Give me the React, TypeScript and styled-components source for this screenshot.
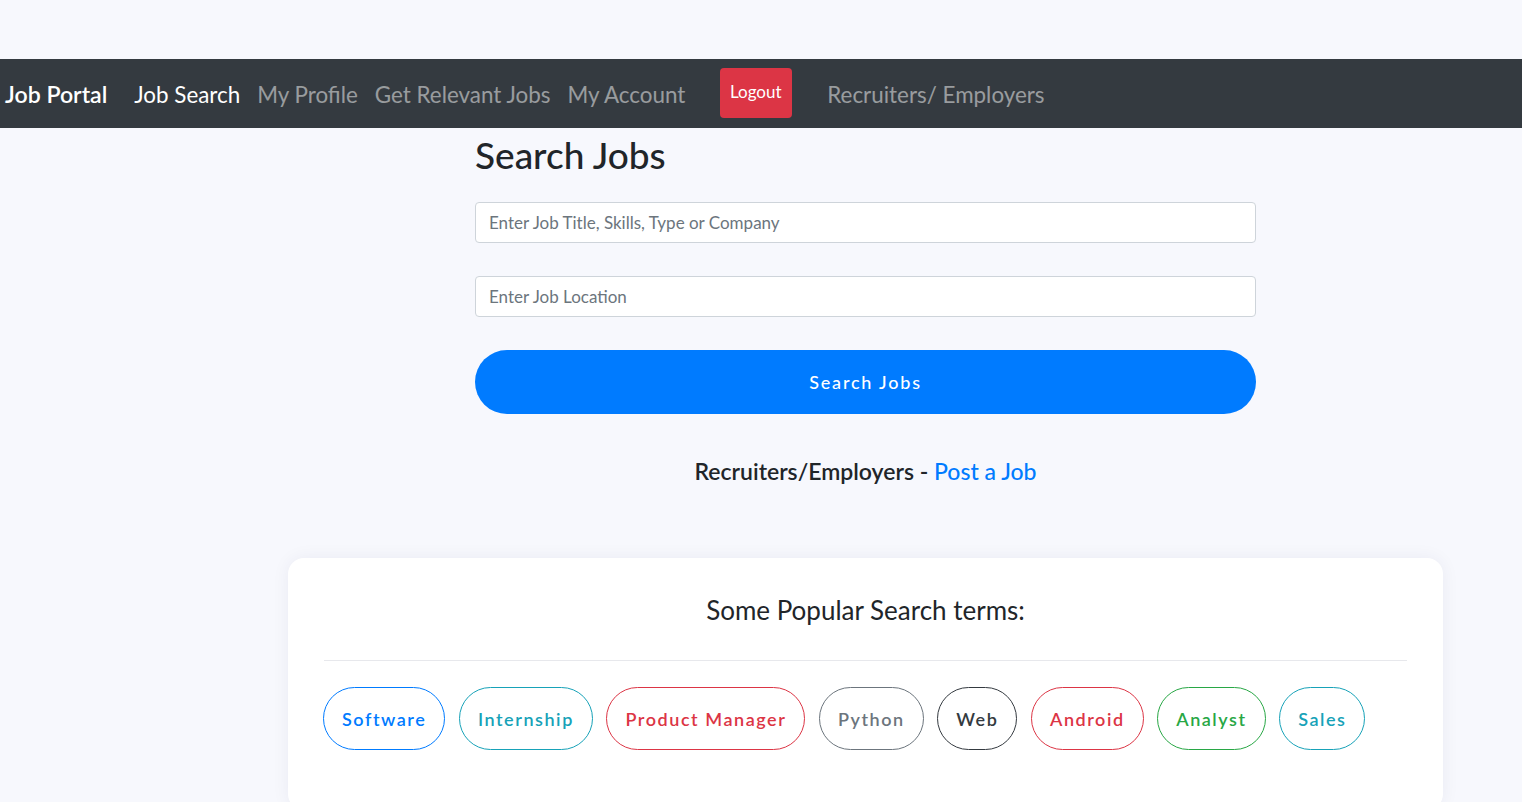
import React from 'react'
import styled, { createGlobalStyle } from 'styled-components'

const GlobalStyle = createGlobalStyle`
  html, body {
    margin: 0;
    padding: 0;
    background: #f7f8fd;
    font-family: Lato, "Open Sans", sans-serif;
    color: #212529;
    overflow: hidden;
  }
`

const Page = styled.div`
  padding-top: 59px;
  min-height: 802px;
  box-sizing: border-box;
`

const NavBar = styled.nav`
  height: 69px;
  background: #343a40;
  display: flex;
  align-items: center;
  padding: 1px 0 0 5px;
  box-sizing: border-box;
`

const Brand = styled.a`
  color: #fff;
  font-size: 23.1px;
  font-weight: 600;
  margin-right: 18.5px;
  text-decoration: none;
`

const NavLink = styled.a<{ $active?: boolean }>`
  color: ${({ $active }) => ($active ? '#fff' : 'rgba(255, 255, 255, 0.5)')};
  font-size: 22.4px;
  padding: 0 8.5px;
  text-decoration: none;
  white-space: nowrap;
`

const LogoutButton = styled.button`
  background: #dc3545;
  color: #fff;
  border: none;
  border-radius: 4px;
  height: 50px;
  width: 72px;
  font-family: Lato, sans-serif;
  font-size: 17px;
  margin: -2px 27px 0 26px;
  padding-bottom: 4px;
`

const Main = styled.main`
  width: 1155px;
  margin-left: 288px;
`

const SearchForm = styled.form`
  width: 781px;
  margin: 0 auto;
  display: flex;
  flex-direction: column;
`

const Title = styled.h1`
  font-size: 37px;
  font-weight: 500;
  margin: 5px 0 25px;
  line-height: 1.2;
`

const Input = styled.input`
  height: 41px;
  box-sizing: border-box;
  border: 1px solid #ced4da;
  border-radius: 4px;
  background: #fff;
  padding: 0 13px;
  font-family: Lato, sans-serif;
  font-size: 17px;
  margin-bottom: 33px;
  &::placeholder {
    color: #6c757d;
  }
`

const SearchButton = styled.button`
  height: 64px;
  border: none;
  border-radius: 32px;
  background: #007bff;
  color: #fff;
  font-family: Lato, sans-serif;
  font-size: 18px;
  font-weight: 500;
  letter-spacing: 1.8px;
`

const PostLine = styled.p`
  text-align: center;
  font-size: 23px;
  font-weight: 600;
  margin: 42px 0 0;
  line-height: 30px;
`

const PostLink = styled.a`
  color: #007bff;
  font-weight: 500;
  text-decoration: none;
`

const Card = styled.section`
  margin-top: 72px;
  background: #fff;
  border-radius: 16px;
  box-shadow: 0 0 18px rgba(30, 40, 90, 0.06);
  padding: 34px 35px 60px 35px;
`

const CardTitle = styled.h3`
  text-align: center;
  font-size: 26px;
  font-weight: 400;
  margin: 0;
  line-height: 36px;
`

const Divider = styled.hr`
  border: none;
  border-top: 1px solid #e7e8ec;
  margin: 32px 1px 26px;
`

const PillRow = styled.div`
  display: flex;
  gap: 13.6px;
`

const Pill = styled.button<{ $color: string }>`
  height: 63px;
  padding: 0 18px;
  border: 1px solid ${({ $color }) => $color};
  border-radius: 32px;
  background: #fff;
  color: ${({ $color }) => $color};
  font-family: Lato, sans-serif;
  font-size: 18px;
  font-weight: 600;
  letter-spacing: 1.55px;
`

const terms = [
  { label: 'Software', color: '#007bff' },
  { label: 'Internship', color: '#17a2b8' },
  { label: 'Product Manager', color: '#dc3545' },
  { label: 'Python', color: '#6c757d' },
  { label: 'Web', color: '#343a40' },
  { label: 'Android', color: '#dc3545' },
  { label: 'Analyst', color: '#28a745' },
  { label: 'Sales', color: '#17a2b8' },
]

const App: React.FC = () => (
  <Page>
    <GlobalStyle />
    <NavBar>
      <Brand href="#">Job Portal</Brand>
      <NavLink $active href="#">Job Search</NavLink>
      <NavLink href="#">My Profile</NavLink>
      <NavLink href="#">Get Relevant Jobs</NavLink>
      <NavLink href="#">My Account</NavLink>
      <LogoutButton>Logout</LogoutButton>
      <NavLink href="#">Recruiters/ Employers</NavLink>
    </NavBar>
    <Main>
      <SearchForm onSubmit={(e) => e.preventDefault()}>
        <Title>Search Jobs</Title>
        <Input placeholder="Enter Job Title, Skills, Type or Company" />
        <Input placeholder="Enter Job Location" />
        <SearchButton type="submit">Search Jobs</SearchButton>
        <PostLine>
          Recruiters/Employers - <PostLink href="#">Post a Job</PostLink>
        </PostLine>
      </SearchForm>
      <Card>
        <CardTitle>Some Popular Search terms:</CardTitle>
        <Divider />
        <PillRow>
          {terms.map((t) => (
            <Pill key={t.label} $color={t.color}>{t.label}</Pill>
          ))}
        </PillRow>
      </Card>
    </Main>
  </Page>
)

export default App
